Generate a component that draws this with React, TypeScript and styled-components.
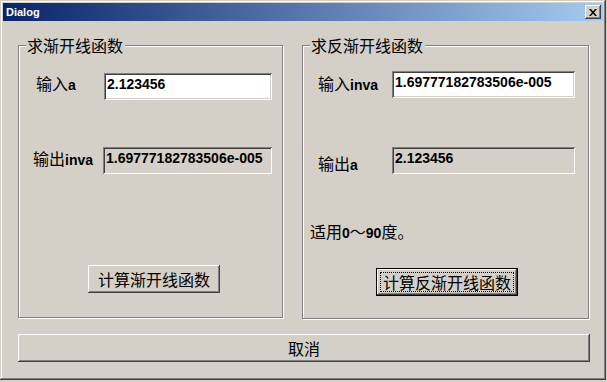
import styled, { createGlobalStyle } from 'styled-components';

const GlobalStyle = createGlobalStyle`
  html, body {
    margin: 0;
    padding: 0;
    background: #d4d0c8;
  }
  #root {
    width: 607px;
    height: 382px;
  }
`;

const cjk = `"Noto Sans CJK SC", "Liberation Sans", sans-serif`;

const Window = styled.div`
  box-sizing: border-box;
  width: 606px;
  height: 380px;
  padding: 3px;
  background: #d4d0c8;
  box-shadow:
    inset -1px -1px 0 #404040,
    inset 1px 1px 0 #d4d0c8,
    inset -2px -2px 0 #808080,
    inset 2px 2px 0 #ffffff;
  display: flex;
  flex-direction: column;
`;

const TitleBar = styled.div`
  height: 18px;
  display: flex;
  align-items: center;
  justify-content: space-between;
  padding: 0 2px 0 3px;
  background: linear-gradient(to right, #0a246a, #a6caf0);
`;

const Title = styled.div`
  font-family: "Liberation Sans", Arial, sans-serif;
  font-weight: 700;
  font-size: 11px;
  color: #ffffff;
  line-height: 14px;
`;

const CloseButton = styled.div`
  box-sizing: border-box;
  width: 16px;
  height: 14px;
  background: #d4d0c8;
  display: flex;
  align-items: center;
  justify-content: center;
  box-shadow:
    inset -1px -1px 0 #404040,
    inset 1px 1px 0 #ffffff,
    inset -2px -2px 0 #808080;
`;

const Body = styled.div`
  display: flex;
  flex-direction: column;
  padding: 24px 0 0 15px;
`;

const GroupRow = styled.div`
  display: flex;
  gap: 19px;
  align-items: flex-start;
`;

const Group = styled.div<{ $w: number; $h: number }>`
  position: relative;
  box-sizing: border-box;
  width: ${(p) => p.$w}px;
  height: ${(p) => p.$h}px;
  border: 1px solid #808080;
  box-shadow: inset 1px 1px 0 #ffffff, 1px 1px 0 #ffffff;
  display: flex;
  flex-direction: column;
  align-items: flex-start;
`;

const GroupTitle = styled.div`
  position: absolute;
  top: -11px;
  left: 7px;
  padding: 0 2px 0 1px;
  background: #d4d0c8;
  font-family: ${cjk};
  font-size: 16px;
  line-height: 20px;
  color: #000;
`;

const Row = styled.div<{ $top: number }>`
  display: flex;
  align-items: flex-start;
  margin-top: ${(p) => p.$top}px;
`;

const Label = styled.div<{ $w: number; $indent: number; $dy: number }>`
  box-sizing: border-box;
  width: ${(p) => p.$w}px;
  padding-left: ${(p) => p.$indent}px;
  margin-top: ${(p) => p.$dy}px;
  font-family: ${cjk};
  font-size: 16px;
  line-height: 20px;
  color: #000;
  white-space: nowrap;
`;

const Latin = styled.span`
  font-family: "Liberation Sans", Arial, sans-serif;
  font-weight: 700;
  font-size: 14px;
`;

const Field = styled.div<{ $w: number; $readOnly?: boolean }>`
  box-sizing: border-box;
  width: ${(p) => p.$w}px;
  height: 27px;
  padding: 3px 3px 0 3px;
  background: ${(p) => (p.$readOnly ? '#d4d0c8' : '#ffffff')};
  box-shadow:
    inset 1px 1px 0 #808080,
    inset -1px -1px 0 #ffffff,
    inset 2px 2px 0 #404040,
    inset -2px -2px 0 #d4d0c8;
  font-family: "Liberation Sans", Arial, sans-serif;
  font-weight: 700;
  font-size: 14px;
  line-height: 16px;
  color: #000;
  white-space: nowrap;
`;

const Note = styled.div<{ $top: number; $indent: number }>`
  margin-top: ${(p) => p.$top}px;
  padding-left: ${(p) => p.$indent}px;
  font-family: ${cjk};
  font-size: 16px;
  line-height: 16px;
  color: #000;
  white-space: nowrap;
`;

const Button = styled.div<{ $w: number; $top?: number; $left?: number; $default?: boolean }>`
  box-sizing: border-box;
  width: ${(p) => p.$w}px;
  height: 28px;
  margin-top: ${(p) => p.$top ?? 0}px;
  margin-left: ${(p) => p.$left ?? 0}px;
  display: flex;
  align-items: center;
  justify-content: center;
  background: #d4d0c8;
  font-family: ${cjk};
  font-size: 16px;
  line-height: 20px;
  color: #000;
  border: ${(p) => (p.$default ? '1px solid #000' : 'none')};
  box-shadow:
    inset -1px -1px 0 #404040,
    inset 1px 1px 0 #ffffff,
    inset -2px -2px 0 #808080;
`;

const Focus = styled.span`
  box-sizing: border-box;
  display: flex;
  align-items: center;
  justify-content: center;
  width: calc(100% - 6px);
  height: calc(100% - 6px);
  outline: 1px dotted #000;
  outline-offset: -1px;
`;

function CloseIcon() {
  return (
    <svg width="8" height="7" viewBox="0 0 8 7">
      <path d="M0 0h2l2 2.5L6 0h2L5 3.5 8 7H6L4 4.5 2 7H0l3-3.5z" fill="#000" />
    </svg>
  );
}

export default function App() {
  return (
    <>
      <GlobalStyle />
      <Window>
        <TitleBar>
          <Title>Dialog</Title>
          <CloseButton>
            <CloseIcon />
          </CloseButton>
        </TitleBar>
        <Body>
          <GroupRow>
            <Group $w={265} $h={273}>
              <GroupTitle>求渐开线函数</GroupTitle>
              <Row $top={27}>
                <Label $w={85} $indent={17} $dy={0}>
                  输入<Latin>a</Latin>
                </Label>
                <Field $w={168}>2.123456</Field>
              </Row>
              <Row $top={47}>
                <Label $w={84} $indent={14} $dy={1}>
                  输出<Latin>inva</Latin>
                </Label>
                <Field $w={169} $readOnly>
                  1.69777182783506e-005
                </Field>
              </Row>
              <Button $w={132} $top={91} $left={69}>
                计算渐开线函数
              </Button>
            </Group>
            <Group $w={287} $h={274}>
              <GroupTitle>求反渐开线函数</GroupTitle>
              <Row $top={25}>
                <Label $w={89} $indent={15} $dy={2}>
                  输入<Latin>inva</Latin>
                </Label>
                <Field $w={183}>1.69777182783506e-005</Field>
              </Row>
              <Row $top={49}>
                <Label $w={89} $indent={15} $dy={6}>
                  输出<Latin>a</Latin>
                </Label>
                <Field $w={183} $readOnly>
                  2.123456
                </Field>
              </Row>
              <Note $top={48} $indent={7}>
                适用<Latin>0</Latin>～<Latin>90</Latin>度。
              </Note>
              <Button $w={142} $top={27} $left={73} $default>
                <Focus>计算反渐开线函数</Focus>
              </Button>
            </Group>
          </GroupRow>
          <Button $w={572} $top={15}>
            取消
          </Button>
        </Body>
      </Window>
    </>
  );
}
